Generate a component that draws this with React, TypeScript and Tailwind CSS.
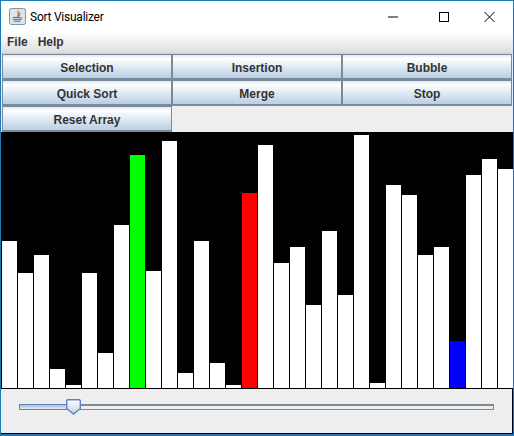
const tops = [241,273,255,369,385,273,353,225,155,271,141,373,241,363,385,193,145,263,247,305,231,295,135,383,185,195,255,247,341,175,159,169];
const colours: Record<number, string> = { 8: "bg-[#00ff00]", 15: "bg-[#ff0000]", 28: "bg-[#0000ff]" };

function Btn({ label }: { label: string }) {
  return (
    <button className="h-[26px] w-[170px] pt-[2px] border-2 border-[#7a8a99] border-t-[1px] border-l-[1px] border-r-[1px] bg-gradient-to-b from-[#dde8f3] via-[#ffffff] via-[15%] to-[#b8cfe5] text-[12px] font-bold text-[#333333] flex items-center justify-center">
      {label}
    </button>
  );
}

export default function App() {
  return (
    <div className="w-[514px] h-[436px] overflow-hidden flex flex-col border-x border-t border-b-2 border-[#1f78b8] bg-[#eeeeee] text-black" style={{ fontFamily: '"Liberation Sans", Arial, sans-serif' }}>
      <div className="h-[31px] shrink-0 bg-white flex items-center pl-[8px]">
        <svg width="17" height="17" viewBox="0 0 18 18" className="mr-[4px]">
          <rect x="0.5" y="0.5" width="17" height="17" rx="2" fill="#dbe5ee" stroke="#7d8b97" />
          <path d="M10 3 C8 5 12 6 9 9 M12 5 C10 6 12 8 10 9" stroke="#d2622a" strokeWidth="1.3" fill="none" />
          <path d="M4 10h7M4 12h9M5 14h7M11 10c3-.5 3 2 0 2.5" stroke="#3f6c94" strokeWidth="1" fill="none" />
        </svg>
        <span className="text-[12px] tracking-[-0.25px] text-black" style={{ fontFamily: 'Roboto, sans-serif' }}>Sort Visualizer</span>
        <div className="ml-auto flex items-center">
          <svg width="46" height="30" viewBox="0 0 46 30"><path d="M13 15h10" stroke="#000" strokeWidth="1" /></svg>
          <svg width="46" height="30" viewBox="0 0 46 30"><rect x="18.5" y="10.5" width="9" height="9" fill="none" stroke="#000" /></svg>
          <svg width="46" height="30" viewBox="0 0 46 30"><path d="M17.5 10l10 10M27.5 10l-10 10" stroke="#000" strokeWidth="1" fill="none" /></svg>
        </div>
      </div>
      <div className="h-[22px] shrink-0 pb-[2px] bg-gradient-to-b from-[#ffffff] to-[#dddddd] border-b border-[#cccccc] flex items-center gap-[10px] pl-[6px] text-[12px] font-bold text-[#333333]">
        <span>File</span>
        <span>Help</span>
      </div>
      <div className="shrink-0 pl-[1px] flex flex-wrap w-[512px]">
        {["Selection", "Insertion", "Bubble", "Quick Sort", "Merge", "Stop", "Reset Array"].map((l) => (
          <Btn key={l} label={l} />
        ))}
      </div>
      <div className="h-[257px] shrink-0 bg-black flex items-end gap-px pl-[1px] border-b border-black">
        {tops.map((t, i) => (
          <div key={i} className={`w-[15px] ${colours[i] ?? "bg-white"}`} style={{ height: 388 - t }} />
        ))}
      </div>
      <div className="flex-1 relative border-r border-b border-black flex items-start pl-[18px] pt-[15px]">
        <div className="w-[475px] h-[6px] flex">
          <div className="w-[48px] h-[6px] border border-[#6382bf] bg-gradient-to-b from-[#a8c0da] to-[#e2ebf4]" />
          <div className="flex-1 h-[6px] border border-[#7a8a99] border-t-2 bg-[#eeeeee]" />
        </div>
        <svg width="15" height="16" viewBox="0 0 15 16" className="absolute left-[65px] top-[10px]">
          <defs>
            <linearGradient id="t" x1="0" y1="0" x2="0" y2="1">
              <stop offset="0" stopColor="#ffffff" />
              <stop offset="1" stopColor="#c0d3e8" />
            </linearGradient>
          </defs>
          <path d="M1.5.7h12l.8.8v8l-6.8 5.6-6.8-5.6v-8z" fill="url(#t)" stroke="#6382bf" strokeWidth="1.4" />
        </svg>
      </div>
    </div>
  );
}
